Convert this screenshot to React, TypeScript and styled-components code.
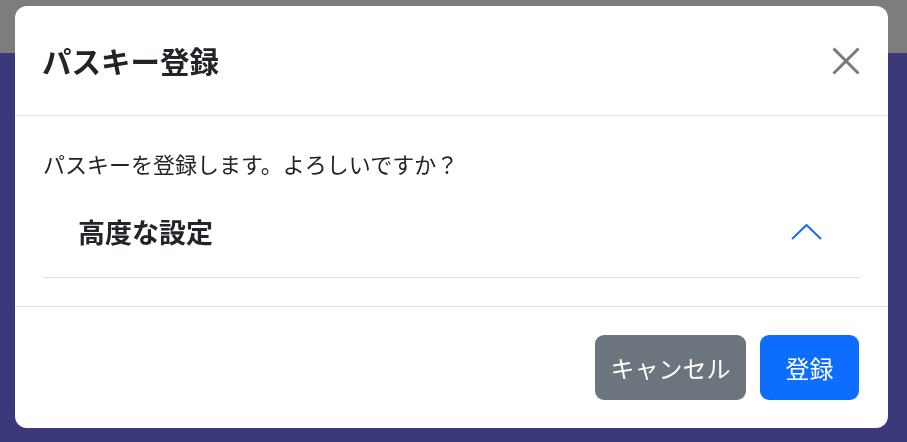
import React, {useState} from 'react';
import styled, {createGlobalStyle} from 'styled-components';

const GlobalStyle = createGlobalStyle`
  html, body {
    margin: 0;
    padding: 0;
    height: 100%;
  }
  body {
    font-family: "Noto Sans CJK JP", "Noto Sans", sans-serif;
    color: #212529;
    background-color: #3b3979;
  }
  #root {
    height: 100%;
  }
`

const Page = styled.div`
  display: flex;
  flex-direction: column;
  height: 100%;
`

const TopBar = styled.div`
  height: 53px;
  background-color: #7c7d7c;
`

const Main = styled.div`
  flex: 1;
  background-color: #3b3979;
`

const Overlay = styled.div`
  position: fixed;
  inset: 0;
  display: flex;
  align-items: flex-start;
  padding: 6px 19px 0 15px;
`

const Dialog = styled.div`
  width: 873px;
  height: 422px;
  display: flex;
  flex-direction: column;
  background-color: #fff;
  border-radius: 12px;
  overflow: hidden;
`

const Header = styled.div`
  height: 109px;
  display: flex;
  align-items: center;
  justify-content: space-between;
  padding: 0 28px 0 27px;
  border-bottom: 1px solid #dee2e6;
`

const Title = styled.h5`
  margin: 0;
  font-size: 29.5px;
  font-weight: 700;
  line-height: 1.5;
`

const CloseButton = styled.button`
  width: 28px;
  height: 28px;
  padding: 0;
  border: 0;
  background: transparent;
  display: flex;
  cursor: pointer;
`

const Body = styled.div`
  padding: 31px 28px 28px;
  border-bottom: 1px solid #dee2e6;
`

const Message = styled.p`
  margin: 0 0 6px;
  font-size: 22px;
  line-height: 33px;
  font-weight: 400;
`

const AccordionItem = styled.div`
  border-bottom: 1px solid #dee2e6;
`

const AccordionButton = styled.button`
  width: 100%;
  height: 91px;
  display: flex;
  align-items: center;
  justify-content: space-between;
  padding: 0 38px 0 35px;
  border: 0;
  background: transparent;
  font-family: inherit;
  font-size: 27px;
  font-weight: 700;
  color: #212529;
  cursor: pointer;
`

const Footer = styled.div`
  flex: 1;
  display: flex;
  justify-content: flex-end;
  align-items: flex-start;
  gap: 14px;
  padding: 28px 29px 0 28px;
`

const Button = styled.button<{$variant: 'secondary' | 'primary'; $width: number}>`
  width: ${p => p.$width}px;
  height: 65px;
  border: 0;
  border-radius: 9px;
  padding: 0;
  font-family: inherit;
  font-size: 24px;
  color: #fff;
  background-color: ${p => (p.$variant === 'primary' ? '#0d6efd' : '#6c757d')};
  cursor: pointer;
`

function App() {
  const [open, setOpen] = useState(true);

  return (
    <>
      <GlobalStyle />
      <Page>
        <TopBar />
        <Main />
      </Page>
      <Overlay>
        <Dialog>
          <Header>
            <Title>パスキー登録</Title>
            <CloseButton aria-label="閉じる">
              <svg width="28" height="28" viewBox="0 0 28 28">
                <path d="M1.5 1.5 L26.5 26.5 M26.5 1.5 L1.5 26.5" stroke="#7a7a7a" strokeWidth="3" />
              </svg>
            </CloseButton>
          </Header>
          <Body>
            <Message>パスキーを登録します。よろしいですか？</Message>
            <AccordionItem>
              <AccordionButton onClick={() => setOpen(!open)}>
                高度な設定
                <svg width="31" height="16" viewBox="0 0 31 16">
                  <path
                    d={open ? 'M1 15 L15.5 1 L30 15' : 'M1 1 L15.5 15 L30 1'}
                    fill="none"
                    stroke="#0d6efd"
                    strokeWidth="2"
                  />
                </svg>
              </AccordionButton>
            </AccordionItem>
          </Body>
          <Footer>
            <Button $variant="secondary" $width={151}>キャンセル</Button>
            <Button $variant="primary" $width={99}>登録</Button>
          </Footer>
        </Dialog>
      </Overlay>
    </>
  );
}

export default App
